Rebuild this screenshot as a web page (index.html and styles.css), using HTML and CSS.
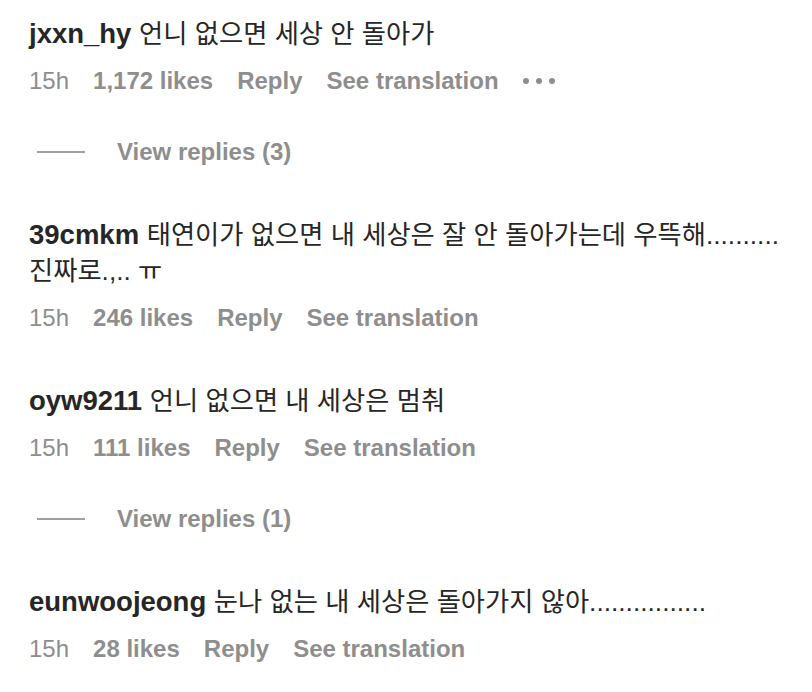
FILE: index.html
```html
<!DOCTYPE html>
<html lang="ko">
<head>
<meta charset="utf-8">
<title>Comments</title>
<link rel="stylesheet" href="styles.css">
</head>
<body>
<main class="comments">
  <section class="thread">
    <div class="comment">
      <p class="text"><span class="user">jxxn_hy</span> <span class="body">언니 없으면 세상 안 돌아가</span></p>
      <div class="meta">
        <span class="time">15h</span>
        <span class="act">1,172 likes</span>
        <span class="act">Reply</span>
        <span class="act">See translation</span>
        <span class="more" aria-label="More options"><i></i><i></i><i></i></span>
      </div>
    </div>
    <div class="view-replies"><span class="rule"></span><span class="act">View replies (3)</span></div>
  </section>

  <section class="thread">
    <div class="comment">
      <p class="text"><span class="user">39cmkm</span> <span class="body">태연이가 없으면 내 세상은 잘 안 돌아가는데 우뜩해..........<br>진짜로.,.. ㅠ</span></p>
      <div class="meta">
        <span class="time">15h</span>
        <span class="act">246 likes</span>
        <span class="act">Reply</span>
        <span class="act">See translation</span>
      </div>
    </div>
  </section>

  <section class="thread">
    <div class="comment">
      <p class="text"><span class="user">oyw9211</span> <span class="body">언니 없으면 내 세상은 멈춰</span></p>
      <div class="meta">
        <span class="time">15h</span>
        <span class="act">111 likes</span>
        <span class="act">Reply</span>
        <span class="act">See translation</span>
      </div>
    </div>
    <div class="view-replies"><span class="rule"></span><span class="act">View replies (1)</span></div>
  </section>

  <section class="thread">
    <div class="comment">
      <p class="text"><span class="user">eunwoojeong</span> <span class="body">눈나 없는 내 세상은 돌아가지 않아................</span></p>
      <div class="meta">
        <span class="time">15h</span>
        <span class="act">28 likes</span>
        <span class="act">Reply</span>
        <span class="act">See translation</span>
      </div>
    </div>
  </section>
</main>
</body>
</html>
```
FILE: styles.css
```css
* { box-sizing: border-box; }

html, body {
  margin: 0;
  padding: 0;
  background: #ffffff;
}

body {
  font-family: "Liberation Sans", "Noto Sans CJK KR", sans-serif;
  color: #262626;
  width: 812px;
  height: 692px;
  overflow: hidden;
}

.comments {
  display: flex;
  flex-direction: column;
  gap: 50px;
  padding: 16px 8px 0 29px;
}

.thread {
  display: flex;
  flex-direction: column;
}

.comment {
  display: flex;
  flex-direction: column;
  gap: 14px;
}

.text {
  margin: 0;
  font-size: 27.5px;
  line-height: 36px;
  white-space: nowrap;
}

.user {
  font-weight: 700;
  color: #262626;
}

.body {
  font-size: 26.3px;
  color: #262626;
}

.meta {
  display: flex;
  align-items: center;
  gap: 24px;
  font-size: 24px;
  line-height: 30px;
  color: #8e8e8e;
}

.time {
  font-weight: 400;
  color: #8e8e8e;
}

.act {
  font-weight: 700;
  color: #8e8e8e;
}

.more {
  display: flex;
  align-items: center;
  gap: 7px;
  height: 30px;
}

.more i {
  display: block;
  width: 6px;
  height: 6px;
  border-radius: 50%;
  background: #8e8e8e;
}

.view-replies {
  display: flex;
  align-items: center;
  margin-top: 41px;
  font-size: 24px;
  line-height: 30px;
}

.rule {
  display: block;
  width: 48px;
  height: 1.5px;
  margin-left: 8px;
  margin-right: 32px;
  background: #a0a0a0;
}
```
